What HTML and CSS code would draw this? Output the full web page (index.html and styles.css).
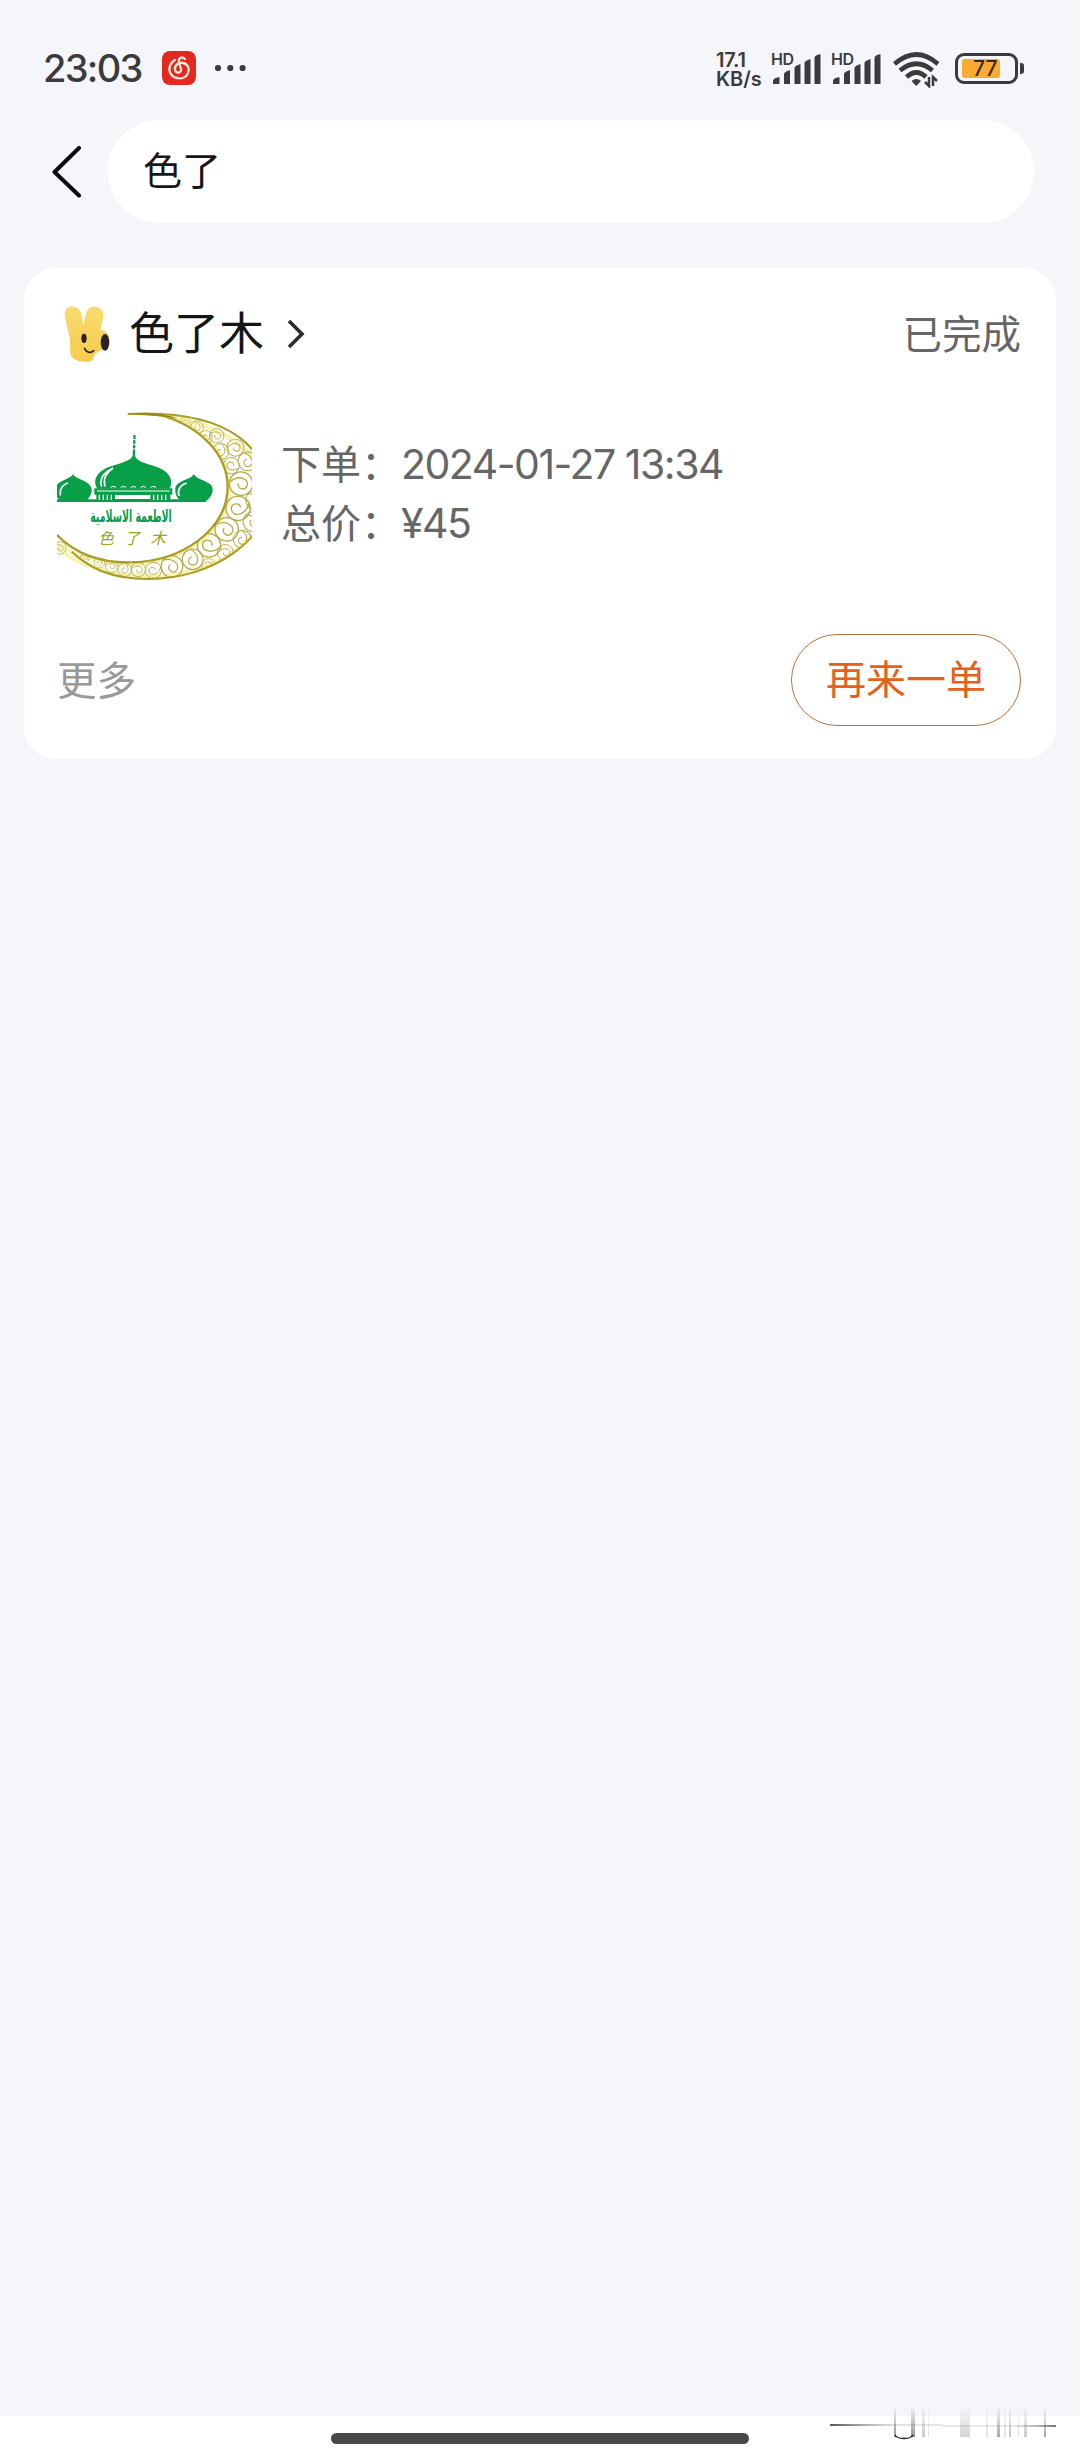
FILE: index.html
```html
<!DOCTYPE html>
<html lang="zh-CN">
<head>
  <meta charset="UTF-8">
  <meta name="viewport" content="width=device-width, initial-scale=1.0">
  <title>订单搜索</title>
  <link rel="stylesheet" href="styles.css">
</head>
<body>
  <header class="status-bar">
    <span class="time">23:03</span>
    <svg class="music-icon" viewBox="0 0 34 34">
      <rect width="34" height="34" rx="8" fill="#e32820"/>
      <path d="M23 8c-3-3-7-1-6 3l2 7c1 4-5 5-6 1-1-5 4-8 8-7 5 1 7 6 5 10-2 5-7 6-11 5-6-1-9-7-7-12 1-3 3-5 5-6" fill="none" stroke="#ffe9d6" stroke-width="2.3" stroke-linecap="round"/>
    </svg>
    <svg class="dots" viewBox="0 0 32 8">
      <circle cx="4" cy="4" r="3.1"/><circle cx="16.3" cy="4" r="3.1"/><circle cx="28.6" cy="4" r="3.1"/>
    </svg>
    <div class="speed"><span class="speed-num">17.1</span><span>KB/s</span></div>
    <div class="signal">
      <span>HD</span>
      <svg viewBox="0 0 50 32"><use href="#bars"/></svg>
    </div>
    <div class="signal">
      <span>HD</span>
      <svg viewBox="0 0 50 32">
        <g id="bars">
          <path d="M2 31v-3q0-3 6.500-4v7zM13 31V21q0-2 6-4v14zM23.500 31V15q0-2 6-4v20zM33.500 31V10q0-2 6-4v25zM43.500 31V5q0-3 6-4v30z"/>
        </g>
      </svg>
    </div>
    <svg class="wifi" viewBox="0 0 46 36">
      <g fill="none" stroke="#3b3b3d" stroke-width="4.600">
        <path d="M1.500 12Q23.500-7 45 12"/>
        <path d="M7 18.500Q23.500 5 39.500 18.500"/>
        <path d="M13.500 25Q23.500 16 33 25"/>
      </g>
      <path d="M18.500 29q5-4 9.500 0l-4.700 5z"/>
      <path d="M36 25v9l-4-4M40 34v-9l4 4" fill="none" stroke="#3b3b3d" stroke-width="2.500"/>
    </svg>
    <div class="battery"><span class="level">77</span></div>
  </header>

  <div class="search">
    <svg class="back" viewBox="0 0 30 52">
      <path d="M27 2 2.500 26 27 49.500" fill="none" stroke="#0b0b0d" stroke-width="4" stroke-linecap="round" stroke-linejoin="round"/>
    </svg>
    <div class="search-box">色了</div>
  </div>

  <main class="card">
    <div class="card-head">
      <svg class="mascot" viewBox="0 0 138 168">
        <defs>
          <linearGradient id="fur" x1="0" y1="0" x2="0" y2="1">
            <stop offset="0" stop-color="#f8db70"/>
            <stop offset="1" stop-color="#f9cb4b"/>
          </linearGradient>
        </defs>
        <path d="M3 34C-2 8 15-2 30 2c17 3 22 16 24 30l4 27 7-33C69 8 79 0 94 2c17 1 26 15 23 32l-8 39c13-2 26 9 27 25 1 15-7 28-18 31-10 6-20 10-27 18l-5 16-11 4C50 170 25 162 20 145c-3-20 0-36-4-55z" fill="url(#fur)"/>
        <ellipse cx="123" cy="109" rx="13" ry="25" fill="#2c2422"/>
        <ellipse cx="60" cy="97" rx="8" ry="14" fill="#2c2422"/>
        <path d="M62 127c3 12 18 16 27 7" fill="none" stroke="#2c2422" stroke-width="5" stroke-linecap="round"/>
      </svg>
      <h1>色了木</h1>
      <svg class="arrow" viewBox="0 0 18 30">
        <path d="M2 2 15 15 2 28" fill="none" stroke="#2c2c2c" stroke-width="3.600"/>
      </svg>
      <span class="state">已完成</span>
    </div>

    <div class="order">
      <svg class="shop-logo" viewBox="36 0 585 570">
        <defs>
          <clipPath id="moon">
            <path d="M250 41C560 20 671 160 671 289S510 537 310 537C130 537 0 480-20 360L20 380C80 455 160 487 250 487C414 487 548 386 548 262S414 37 250 41z"/>
          </clipPath>
          <g id="curl" fill="none" stroke-width="3">
            <circle r="27"/>
            <path d="M-26 6C-12-20 15-17 15 0 14 14-7 14-6 1"/>
          </g>
        </defs>
        <!-- crescent filled with curls -->
        <g clip-path="url(#moon)" stroke="#b5ab48">
          <g stroke="#f8f3b4">
            <ellipse cx="310" cy="289" rx="355" ry="241" fill="none" stroke-width="14"/>
            <ellipse cx="250" cy="262" rx="305" ry="232" fill="none" stroke-width="10"/>
          </g>
          <use href="#curl" transform="translate(380 64) scale(.5)"/>
          <use href="#curl" transform="translate(419 70) scale(.65)"/>
          <use href="#curl" transform="translate(456 82) rotate(80) scale(.7)"/>
          <use href="#curl" transform="translate(482 112) rotate(160) scale(.75)"/>
          <use href="#curl" transform="translate(515 107) rotate(30) scale(.8)"/>
          <use href="#curl" transform="translate(527 155) rotate(110) scale(.9)"/>
          <use href="#curl" transform="translate(571 143) rotate(10) scale(.95)"/>
          <use href="#curl" transform="translate(559 197) rotate(210) scale(.9)"/>
          <use href="#curl" transform="translate(608 184) rotate(80) scale(1.050)"/>
          <use href="#curl" transform="translate(588 251) rotate(20) scale(1.300)"/>
          <use href="#curl" transform="translate(579 325) rotate(170) scale(1.350)"/>
          <use href="#curl" transform="translate(632 300) rotate(50) scale(1.100)"/>
          <use href="#curl" transform="translate(624 365) rotate(50) scale(1.100)"/>
          <use href="#curl" transform="translate(545 388) rotate(40) scale(1.300)"/>
          <use href="#curl" transform="translate(592 418) rotate(100) scale(1)"/>
          <use href="#curl" transform="translate(492 436) rotate(200) scale(1.300)"/>
          <use href="#curl" transform="translate(541 458) rotate(10) scale(.9)"/>
          <use href="#curl" transform="translate(443 478) rotate(90) scale(1.150)"/>
          <use href="#curl" transform="translate(490 496) rotate(10) scale(.75)"/>
          <use href="#curl" transform="translate(381 499) rotate(50) scale(1.200)"/>
          <use href="#curl" transform="translate(325 511) rotate(170) scale(.9)"/>
          <use href="#curl" transform="translate(280 509) rotate(20) scale(.8)"/>
          <use href="#curl" transform="translate(239 509) rotate(110) scale(.75)"/>
          <use href="#curl" transform="translate(200 499) rotate(10) scale(.7)"/>
          <use href="#curl" transform="translate(163 488) rotate(80) scale(.6)"/>
          <use href="#curl" transform="translate(120 473) rotate(30) scale(.5)"/>
          <use href="#curl" transform="translate(44 444) rotate(30) scale(.7)"/>
        </g>
        <path d="M248 42C580 26 671 165 671 289S510 537 310 537C190 537 130 500 80 455" fill="none" stroke="#aa9c24" stroke-width="6"/>
        <path d="M340 42C470 80 548 165 548 262C548 386 414 487 250 487C150 487 80 450 36 405" fill="none" stroke="#aa9c24" stroke-width="7"/>
        <path d="M248 42Q325 32 400 55L340 49z" fill="#958915"/>
        <!-- mosque -->
        <g fill="#079f48">
          <path d="M265 105h7l-2 62c4 17 30 21 63 33 43 14 53 42 41 66H157c-16-26 0-53 37-66 38-13 64-18 69-33z"/>
          <path d="M148 265h234v19H148zM154 284h222v20H154zM36 298h447v8H36z"/>
          <path d="M36 255c10-14 37-17 49-32 5 14 31 15 45 28 16 13 12 34-5 49H44l-8-8z"/>
          <path d="M391 264c5-24 45-23 56-42 6 15 35 19 49 31 14 14 6 36-13 51h-75c-10-7-19-21-17-40z"/>
        </g>
        <g fill="none" stroke="#fff">
          <path d="M170 260q-10-36 34-55-33 20-24 55" stroke-width="5"/>
          <path d="M197 262q8-6 16 0M227 262q8-6 16 0M257 262q8-6 16 0M287 262q8-6 16 0M317 262q8-6 16 0M156 273h218" stroke-width="3"/>
          <path d="M163 284v16M175 284v16M187 284v16M199 284v16M326 284v16M338 284v16M350 284v16M362 284v16" stroke-width="4"/>
          <path d="M210 291h106" stroke-width="12"/>
          <path d="M46 286q-4-28 23-38M402 288q-8-28 23-39" stroke-width="5"/>
          <path d="M261 119h15M261 133h15M261 147h15" stroke-width="3"/>
        </g>
        <text class="logo-arabic" x="258" y="366" text-anchor="middle" textLength="245" lengthAdjust="spacingAndGlyphs">الاطعمة الاسلامية</text>
        <text class="logo-name" x="160" y="433">色了木</text>
      </svg>
      <div class="info">
        <p>下单：<span class="num">2024-01-27 13:34</span></p>
        <p>总价：<span class="num">¥45</span></p>
      </div>
    </div>

    <div class="card-foot">
      <span class="more">更多</span>
      <button class="again">再来一单</button>
    </div>
  </main>

  <footer class="nav-bar">
    <div class="home-line"></div>
    <svg class="streaks" viewBox="0 0 228 34">
      <defs>
        <linearGradient id="fade" x1="0" y1="0" x2="0" y2="1">
          <stop offset="0" stop-color="#555" stop-opacity="0"/>
          <stop offset="1" stop-color="#555" stop-opacity=".65"/>
        </linearGradient>
        <linearGradient id="rule" x1="0" y1="0" x2="1" y2="0">
          <stop offset="0" stop-color="#555"/>
          <stop offset=".3" stop-color="#bbb" stop-opacity=".4"/>
          <stop offset=".8" stop-color="#bbb" stop-opacity=".3"/>
          <stop offset="1" stop-color="#777"/>
        </linearGradient>
      </defs>
      <path d="M1 18h112v1h114v2H113v-1H1z" fill="url(#rule)"/>
      <g fill="url(#fade)">
        <rect x="65" y="0" width="2" height="31"/>
        <rect x="82" y="0" width="4" height="31"/>
        <rect x="93" y="0" width="3" height="31" opacity=".5"/>
        <rect x="99" y="0" width="1" height="31" opacity=".3"/>
        <rect x="131" y="0" width="10" height="31" opacity=".4"/>
        <rect x="157" y="0" width="2" height="31" opacity=".3"/>
        <rect x="168" y="0" width="3" height="31" opacity=".8"/>
        <rect x="175" y="0" width="2" height="31" opacity=".3"/>
        <rect x="180" y="0" width="2" height="31" opacity=".6"/>
        <rect x="189" y="0" width="1" height="31" opacity=".3"/>
        <rect x="195" y="0" width="3" height="31" opacity=".5"/>
        <rect x="215" y="0" width="2" height="31" opacity=".8"/>
      </g>
      <path d="M66 29q2 3.500 9 3.500t9-3.500" fill="none" stroke="#111" stroke-width="1.300"/>
    </svg>
  </footer>
</body>
</html>
```

FILE: styles.css
```css
* {
  box-sizing: border-box;
  margin: 0;
  padding: 0;
}

body {
  display: flex;
  flex-direction: column;
  height: 2460px;
  background-color: #f5f6fa;
  font-family: "Noto Sans CJK SC", sans-serif;
}

.status-bar {
  display: flex;
  align-items: flex-start;
  height: 120px;
  padding: 32px 55px 0 43px;
  color: #3b3b3d;
  fill: #3b3b3d;
  font-family: Inter, sans-serif;
}

.time {
  width: 119px;
  margin-top: 12px;
  font-size: 38px;
  font-weight: 500;
  line-height: 48px;
  letter-spacing: -1.7px;
}

.music-icon {
  width: 34px;
  height: 34px;
  margin-top: 19px;
}

.dots {
  width: 32px;
  height: 8px;
  margin: 32px 0 0 18px;
}

.speed {
  display: flex;
  flex-direction: column;
  width: 55px;
  margin: 19px 0 0 470px;
  font-size: 20px;
  font-weight: 600;
  line-height: 19px;
}

.speed-num {
  letter-spacing: -0.2px;
}

.signal {
  display: grid;
  width: 60px;
  margin-top: 21px;
}

.signal span,
.signal svg {
  grid-area: 1 / 1;
}

.signal span {
  font-size: 16px;
  font-weight: 600;
  line-height: 12px;
  letter-spacing: -0.5px;
}

.signal svg {
  width: 50px;
  height: 32px;
}

.wifi {
  width: 46px;
  height: 36px;
  margin: 20px 0 0 2px;
}

.battery {
  position: relative;
  width: 63px;
  height: 31px;
  margin: 21px 0 0 16px;
  padding: 3px 4px;
  border: 3px solid #3b3b3d;
  border-radius: 9px;
}

.battery::after {
  content: "";
  position: absolute;
  top: 7px;
  right: -9px;
  width: 4px;
  height: 11px;
  border-radius: 0 3px 3px 0;
  background-color: #3b3b3d;
}

.level {
  display: block;
  width: 38px;
  height: 19px;
  padding-left: 11px;
  border-radius: 3px;
  background-color: #fbab32;
  color: #38291a;
  font-size: 21px;
  font-weight: 500;
  line-height: 19px;
}

.search {
  display: flex;
  align-items: center;
  gap: 26px;
  height: 103px;
  padding: 0 46px 0 52px;
}

.back {
  width: 30px;
  height: 52px;
}

.search-box {
  flex: 1;
  height: 103px;
  padding-left: 35px;
  border-radius: 52px;
  background-color: #fff;
  color: #161616;
  font-size: 39px;
  line-height: 96px;
}

.card {
  display: flex;
  flex-direction: column;
  height: 491px;
  margin: 45px 24px 0 24px;
  padding: 37px 35px 34px 33px;
  border-radius: 32px;
  background-color: #fff;
}

.card-head {
  display: flex;
  align-items: center;
  height: 58px;
}

.mascot {
  width: 46px;
  height: 56px;
  margin-left: 7px;
}

h1 {
  width: 138px;
  margin-left: 19px;
  padding-bottom: 6px;
  color: #161616;
  font-size: 45px;
  font-weight: 400;
  line-height: 58px;
}

.arrow {
  width: 18px;
  height: 30px;
  margin-left: 20px;
}

.state {
  margin-left: auto;
  padding-bottom: 6px;
  color: #666;
  font-size: 39.5px;
}

.order {
  display: flex;
  height: 190px;
  margin-top: 37px;
}

.shop-logo {
  width: 195px;
  height: 190px;
}

.logo-arabic {
  fill: #0a9d4c;
  font-family: "DejaVu Sans", sans-serif;
  font-size: 52px;
  font-weight: 700;
}

.logo-name {
  fill: #9ba51c;
  font-size: 47px;
  font-style: italic;
  letter-spacing: 31px;
}

.info {
  margin: 33px 0 0 29px;
  color: #666;
  font-size: 40px;
}

.info p {
  height: 59px;
  line-height: 59px;
}

.num {
  font-family: Inter, sans-serif;
  font-size: 41px;
  line-height: 1;
  letter-spacing: -1.5px;
}

.card-foot {
  display: flex;
  align-items: center;
  justify-content: space-between;
  height: 92px;
  margin-top: 44px;
}

.more {
  padding-bottom: 6px;
  color: #999;
  font-size: 39.5px;
}

.again {
  width: 230px;
  height: 92px;
  padding-bottom: 6px;
  border: 1px solid #b5703a;
  border-radius: 46px;
  background-color: #fff;
  color: #e3611a;
  font-family: inherit;
  font-size: 40px;
}

.nav-bar {
  position: relative;
  height: 44px;
  margin-top: auto;
  padding-top: 17px;
  background-color: #fff;
}

.home-line {
  width: 418px;
  height: 11px;
  margin: 0 auto;
  border-radius: 6px;
  background-color: #484848;
}

.streaks {
  position: absolute;
  top: -10px;
  right: 23px;
  width: 228px;
  height: 34px;
}
```
